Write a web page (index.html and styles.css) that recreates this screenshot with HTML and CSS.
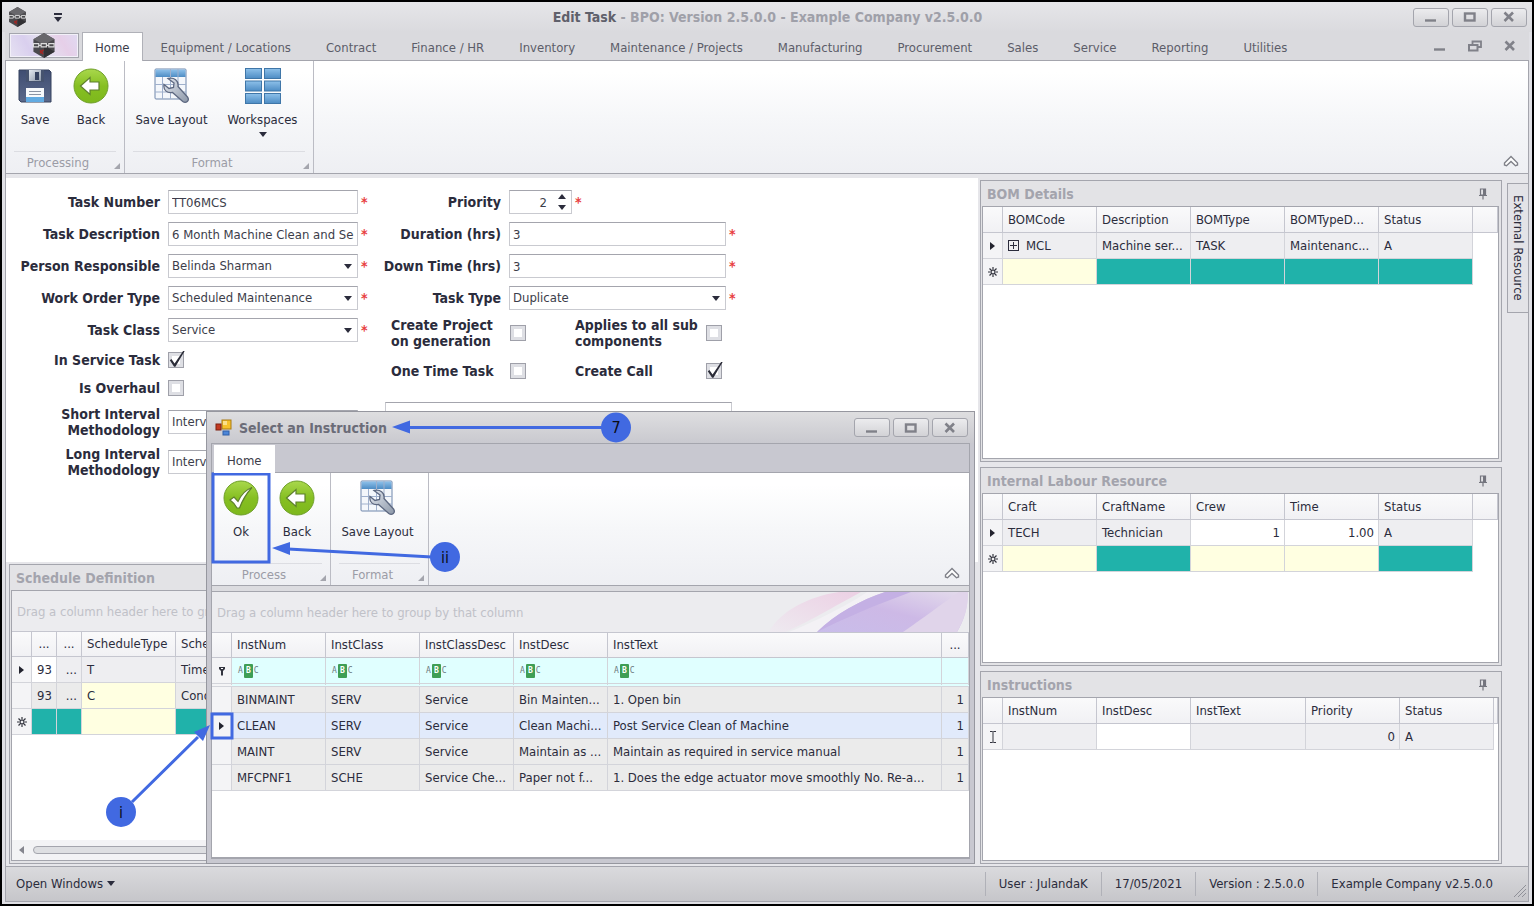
FILE: index.html
```html
<!DOCTYPE html>
<html lang="en">

<head>
    <meta charset="UTF-8">
    <meta name="viewport" content="width=device-width, initial-scale=1.0">
    <title>Edit Task - BPO</title>
    <link rel="stylesheet" href="styles.css">
</head>

<body>
    <svg class="sprite" width="0" height="0">
        <defs>
            <linearGradient id="green" x1="0" y1="0" x2="0" y2="1">
                <stop offset="0" stop-color="#a9d84c" />
                <stop offset="0.5" stop-color="#86bf22" />
                <stop offset="1" stop-color="#7db81c" />
            </linearGradient>
            <linearGradient id="blue" x1="0" y1="0" x2="0" y2="1">
                <stop offset="0" stop-color="#8ec1ea" />
                <stop offset="1" stop-color="#4d8cc4" />
            </linearGradient>
            <linearGradient id="navy" x1="0" y1="0" x2="0" y2="1">
                <stop offset="0" stop-color="#3f4d72" />
                <stop offset="1" stop-color="#5b698a" />
            </linearGradient>
            <linearGradient id="steel" x1="0" y1="0" x2="1" y2="1">
                <stop offset="0" stop-color="#e4e9f0" />
                <stop offset="1" stop-color="#8c97a8" />
            </linearGradient>
            <linearGradient id="petal" x1="0" y1="1" x2="1" y2="0">
                <stop offset="0" stop-color="#c9bdea" />
                <stop offset="0.5" stop-color="#cdb9e6" />
                <stop offset="1" stop-color="#e4dcec" />
            </linearGradient>
            <linearGradient id="pink" x1="0" y1="1" x2="1" y2="0">
                <stop offset="0" stop-color="#eeeaf0" />
                <stop offset="1" stop-color="#ecd0e4" />
            </linearGradient>
        </defs>
        <symbol id="logo" viewBox="0 0 24 26">
            <path d="M12 0L23 6.500V19.500L12 26L1 19.500V6.500Z" fill="#4a494d" />
            <path d="M12 0L23 6.500L12 12L1 6.500Z" fill="#68676b" />
            <path d="M12 13L23 19.500L12 26Z" fill="#323134" />
            <path d="M1 11h5.500v3.500H1zM9 11h5.500v3.500H9zM17 11h5.500v3.500H17zM6.500 12.800H9M14.500 12.800H17" fill="none" stroke="#dcdcdc" stroke-width="1.200" />
            <path d="M8 18l3 4M11.500 17.500l-3.500 3.500" stroke="#a32622" stroke-width="1.600" />
        </symbol>
        <symbol id="save" viewBox="0 0 36 36">
            <path d="M2 2h30l2 2v30H4l-2-2z" fill="url(#navy)" stroke="#36425f" />
            <path d="M9 2h18v12H9z" fill="#46536f" />
            <path d="M12 2h12v11H12z" fill="url(#steel)" />
            <path d="M18 4h4v8h-4z" fill="#36425f" />
            <path d="M9 20h18v13H9z" fill="#f7f9fb" />
            <path d="M9 29h18v5H9z" fill="#62abe2" />
            <path d="M12 23.500h12M12 26.500h12" stroke="#8a93a3" />
        </symbol>
        <symbol id="back" viewBox="0 0 36 36">
            <circle cx="18" cy="18" r="17" fill="url(#green)" stroke="#6f9f2a" />
            <path d="M7.500 18L17 9.500V14h9v8h-9v4.500z" fill="#fff" stroke="#5d7f2c" stroke-width="1.200" />
        </symbol>
        <symbol id="ok" viewBox="0 0 36 36">
            <circle cx="18" cy="18" r="17" fill="url(#green)" stroke="#6f9f2a" />
            <path d="M7 20l4-3 4 4.500C18 15 22 10 29 7.500C23 14 19.500 20 16.500 28h-2.500C12 24.500 10 22 7 20z" fill="#fff" stroke="#5d7f2c" stroke-width="1.200" />
        </symbol>
        <symbol id="layout" viewBox="0 0 36 36">
            <rect x="1" y="1" width="31" height="30" rx="1" fill="#f4f7fb" stroke="#6f86ab" />
            <rect x="1.500" y="1.500" width="30" height="7.500" fill="url(#blue)" />
            <path d="M1 16.500h31M1 24h31M8.500 9v22M16.500 1v30M24 1v30" stroke="#9fb0cc" />
            <path d="M14 10.500c6-1.500 11 2 10 8l9.500 10.500c2.500 3.500-1.500 7-4.700 4.500L18.500 24.500c-5 1-9.500-2-8.500-8l5 4 4.500-1 .5-4.500z" fill="url(#steel)" stroke="#5d6880" stroke-width="1.300" />
        </symbol>
        <symbol id="spaces" viewBox="0 0 36 36">
            <g fill="url(#blue)" stroke="#3f76a8">
                <rect x=".5" y=".5" width="16" height="10" />
                <rect x="19.500" y=".5" width="16" height="10" />
                <rect x=".5" y="13" width="16" height="10" />
                <rect x="19.500" y="13" width="16" height="10" />
                <rect x=".5" y="25.500" width="16" height="10" />
                <rect x="19.500" y="25.500" width="16" height="10" />
            </g>
        </symbol>
        <symbol id="min" viewBox="0 0 14 12">
            <path d="M1 9.500h11" stroke="#808189" stroke-width="2.400" />
        </symbol>
        <symbol id="max" viewBox="0 0 14 12">
            <rect x="2" y="2.500" width="9.500" height="7" fill="none" stroke="#808189" stroke-width="2.400" />
        </symbol>
        <symbol id="restore" viewBox="0 0 14 12">
            <path d="M4.500 4V1.500h8.500V7h-3" fill="none" stroke="#808189" stroke-width="1.800" />
            <rect x="1" y="5" width="8.500" height="5.500" fill="none" stroke="#808189" stroke-width="2" />
        </symbol>
        <symbol id="close" viewBox="0 0 14 12">
            <path d="M2.500 1.500l8.500 8.500M11 1.500L2.500 10" stroke="#808189" stroke-width="2.600" />
        </symbol>
        <symbol id="up" viewBox="0 0 16 12">
            <path d="M1.500 8L8 1.500L14.500 8v2l-2 .8L8 6.500L3.500 10.800L1.500 10z" fill="#fff" stroke="#7f8088" stroke-width="1.400" />
        </symbol>
        <symbol id="pin" viewBox="0 0 10 12">
            <path d="M2.500 1h5v6h-5zM1 7.500h8M5 8v3.500" fill="none" stroke="#74757e" stroke-width="1.200" />
            <path d="M5 1h2.500v6H5z" fill="#74757e" />
        </symbol>
        <symbol id="star" viewBox="0 0 10 10">
            <path d="M5 0v10M0 5h10M1.500 1.500l7 7M8.500 1.500l-7 7" stroke="#33343f" stroke-width="1.200" />
            <circle cx="5" cy="5" r="1.200" fill="#f4f4f6" />
        </symbol>
    </svg>

    <div class="window">
        <header class="titlebar">
            <svg class="title-logo"><use href="#logo" /></svg>
            <button class="quick" aria-label="Customize toolbar"><i class="caret"></i></button>
            <h1><b>Edit Task</b> - BPO: Version 2.5.0.0 - Example Company v2.5.0.0</h1>
            <div class="win-btns">
                <button aria-label="Minimize"><svg><use href="#min" /></svg></button>
                <button aria-label="Maximize"><svg><use href="#max" /></svg></button>
                <button aria-label="Close"><svg><use href="#close" /></svg></button>
            </div>
        </header>

        <nav class="tabs">
            <button class="app-btn" aria-label="Application menu"><svg><use href="#logo" /></svg></button>
            <a class="tab active" href="#">Home</a>
            <a class="tab" href="#">Equipment / Locations</a>
            <a class="tab" href="#">Contract</a>
            <a class="tab" href="#">Finance / HR</a>
            <a class="tab" href="#">Inventory</a>
            <a class="tab" href="#">Maintenance / Projects</a>
            <a class="tab" href="#">Manufacturing</a>
            <a class="tab" href="#">Procurement</a>
            <a class="tab" href="#">Sales</a>
            <a class="tab" href="#">Service</a>
            <a class="tab" href="#">Reporting</a>
            <a class="tab" href="#">Utilities</a>
            <div class="mdi-btns">
                <button aria-label="Minimize child"><svg><use href="#min" /></svg></button>
                <button aria-label="Restore child"><svg><use href="#restore" /></svg></button>
                <button aria-label="Close child"><svg><use href="#close" /></svg></button>
            </div>
        </nav>

        <section class="ribbon">
            <div class="group">
                <div class="group-btns">
                    <button class="big"><svg><use href="#save" /></svg>Save</button>
                    <button class="big"><svg><use href="#back" /></svg>Back</button>
                </div>
                <div class="group-name">Processing</div>
            </div>
            <div class="group">
                <div class="group-btns">
                    <button class="big wide"><svg><use href="#layout" /></svg>Save Layout</button>
                    <button class="big wide"><svg><use href="#spaces" /></svg>Workspaces<i class="caret"></i></button>
                </div>
                <div class="group-name">Format</div>
            </div>
            <button class="collapse" aria-label="Collapse ribbon"><svg><use href="#up" /></svg></button>
        </section>

        <main class="content">
            <div class="left">
                <form class="form">
                    <div class="form-col first">
                        <div class="field">
                            <label for="number">Task Number</label>
                            <input id="number" type="text" value="TT06MCS">
                            <span class="req">*</span>
                        </div>
                        <div class="field">
                            <label for="desc">Task Description</label>
                            <input id="desc" type="text" value="6 Month Machine Clean and Service">
                            <span class="req">*</span>
                        </div>
                        <div class="field">
                            <label for="person">Person Responsible</label>
                            <div class="combo"><select id="person"><option>Belinda Sharman</option></select></div>
                            <span class="req">*</span>
                        </div>
                        <div class="field">
                            <label for="wotype">Work Order Type</label>
                            <div class="combo"><select id="wotype"><option>Scheduled Maintenance</option></select></div>
                            <span class="req">*</span>
                        </div>
                        <div class="field">
                            <label for="class">Task Class</label>
                            <div class="combo"><select id="class"><option>Service</option></select></div>
                            <span class="req">*</span>
                        </div>
                        <div class="field check">
                            <label for="inservice">In Service Task</label>
                            <input id="inservice" type="checkbox" checked>
                        </div>
                        <div class="field check">
                            <label for="overhaul">Is Overhaul</label>
                            <input id="overhaul" type="checkbox">
                        </div>
                        <div class="field tall">
                            <label for="short">Short Interval Methodology</label>
                            <div class="combo"><select id="short"><option>Interval</option></select></div>
                        </div>
                        <div class="field tall">
                            <label for="long">Long Interval Methodology</label>
                            <div class="combo"><select id="long"><option>Interval</option></select></div>
                        </div>
                    </div>

                    <div class="form-col second">
                        <div class="field">
                            <label for="priority">Priority</label>
                            <div class="spin"><input id="priority" type="number" value="2"></div>
                            <span class="req">*</span>
                        </div>
                        <div class="field">
                            <label for="duration">Duration (hrs)</label>
                            <input id="duration" type="text" value="3">
                            <span class="req">*</span>
                        </div>
                        <div class="field">
                            <label for="down">Down Time (hrs)</label>
                            <input id="down" type="text" value="3">
                            <span class="req">*</span>
                        </div>
                        <div class="field">
                            <label for="type">Task Type</label>
                            <div class="combo"><select id="type"><option>Duplicate</option></select></div>
                            <span class="req">*</span>
                        </div>
                        <div class="checks">
                            <label for="project">Create Project<br>on generation</label>
                            <input id="project" type="checkbox">
                            <label for="subs">Applies to all sub<br>components</label>
                            <input id="subs" type="checkbox">
                            <label for="onetime">One Time Task</label>
                            <input id="onetime" type="checkbox">
                            <label for="call">Create Call</label>
                            <input id="call" type="checkbox" checked>
                        </div>
                        <textarea class="notes" aria-label="Notes"></textarea>
                    </div>
                </form>

                <section class="panel schedule">
                    <h2>Schedule Definition</h2>
                    <div class="grid">
                        <div class="group-panel">Drag a column header here to group by that column</div>
                        <table>
                            <colgroup>
                                <col class="ind"><col class="w25"><col class="w25"><col class="w94"><col class="w94"><col>
                            </colgroup>
                            <tr><th></th><th class="c">...</th><th class="c">...</th><th>ScheduleType</th><th>ScheduleDesc</th><th></th></tr>
                            <tr><td class="ind"><i class="arrow"></i></td><td class="edit">93</td><td class="r">...</td><td>T</td><td>Time</td></tr>
                            <tr class="alt"><td class="ind"></td><td>93</td><td class="r">...</td><td class="yellow">C</td><td>Condition</td></tr>
                            <tr><td class="ind"><svg class="star"><use href="#star" /></svg></td><td class="teal"></td><td class="teal"></td><td class="yellow"></td><td class="teal"></td></tr>
                        </table>
                        <div class="scroll"><i class="arrow"></i><span class="thumb"></span></div>
                    </div>
                </section>
            </div>

            <div class="right">
                <section class="panel bom">
                    <h2>BOM Details <svg class="pin"><use href="#pin" /></svg></h2>
                    <div class="grid">
                        <table>
                            <colgroup>
                                <col class="ind"><col class="w94"><col class="w94"><col class="w94"><col class="w94"><col class="w94"><col>
                            </colgroup>
                            <tr><th></th><th>BOMCode</th><th>Description</th><th>BOMType</th><th>BOMTypeD...</th><th>Status</th><th></th></tr>
                            <tr><td class="ind"><i class="arrow"></i></td><td><button class="expand" aria-label="Expand"></button>MCL</td><td>Machine ser...</td><td>TASK</td><td>Maintenanc...</td><td>A</td></tr>
                            <tr><td class="ind"><svg class="star"><use href="#star" /></svg></td><td class="yellow"></td><td class="teal"></td><td class="teal"></td><td class="teal"></td><td class="teal"></td></tr>
                        </table>
                    </div>
                </section>

                <section class="panel labour">
                    <h2>Internal Labour Resource <svg class="pin"><use href="#pin" /></svg></h2>
                    <div class="grid">
                        <table>
                            <colgroup>
                                <col class="ind"><col class="w94"><col class="w94"><col class="w94"><col class="w94"><col class="w94"><col>
                            </colgroup>
                            <tr><th></th><th>Craft</th><th>CraftName</th><th>Crew</th><th>Time</th><th>Status</th><th></th></tr>
                            <tr><td class="ind"><i class="arrow"></i></td><td>TECH</td><td>Technician</td><td class="edit r">1</td><td class="edit r">1.00</td><td>A</td></tr>
                            <tr><td class="ind"><svg class="star"><use href="#star" /></svg></td><td class="yellow"></td><td class="teal"></td><td class="yellow"></td><td class="yellow"></td><td class="teal"></td></tr>
                        </table>
                    </div>
                </section>

                <section class="panel instructions">
                    <h2>Instructions <svg class="pin"><use href="#pin" /></svg></h2>
                    <div class="grid">
                        <table>
                            <colgroup>
                                <col class="ind"><col class="w94"><col class="w94"><col class="w115"><col class="w94"><col class="w94"><col>
                            </colgroup>
                            <tr><th></th><th>InstNum</th><th>InstDesc</th><th>InstText</th><th>Priority</th><th>Status</th><th></th></tr>
                            <tr><td class="ind"><svg class="ibeam" viewBox="0 0 8 12"><path d="M1 .5h2.500l.5.500l.5-.500H7M1 11.500h2.500l.5-.500l.5.500H7M4 1v10" fill="none" stroke="#33343f" /></svg></td><td></td><td class="edit"></td><td></td><td class="r">0</td><td>A</td></tr>
                        </table>
                    </div>
                </section>
            </div>

            <aside class="side">
                <button class="side-tab">External Resource</button>
            </aside>
        </main>

        <footer class="status">
            <button class="open-windows">Open Windows <i class="caret"></i></button>
            <span class="item">User : JulandaK</span>
            <span class="item">17/05/2021</span>
            <span class="item">Version : 2.5.0.0</span>
            <span class="item">Example Company v2.5.0.0</span>
            <svg class="grip" viewBox="0 0 14 14"><path d="M1 13L13 1M5 13l8-8M9 13l4-4" stroke="#8f9098" /></svg>
        </footer>

        <div class="dialog" role="dialog" aria-labelledby="dialog-title">
            <header class="dialog-title">
                <svg class="form-icon" viewBox="0 0 17 17">
                    <rect x="7" y="1" width="9" height="9" fill="#f6c12c" stroke="#a97b12" />
                    <rect x="8" y="2" width="4" height="4" fill="#fbe08a" />
                    <rect x="1" y="5" width="5" height="6" fill="#c23a22" stroke="#7f2010" />
                    <rect x="8" y="12" width="6" height="4" fill="#4c86d8" stroke="#2f5ea8" />
                </svg>
                <h2 id="dialog-title">Select an Instruction</h2>
                <div class="win-btns">
                    <button aria-label="Minimize"><svg><use href="#min" /></svg></button>
                    <button aria-label="Maximize"><svg><use href="#max" /></svg></button>
                    <button aria-label="Close"><svg><use href="#close" /></svg></button>
                </div>
            </header>
            <div class="dialog-body">
                <nav class="tabs">
                    <a class="tab active" href="#">Home</a>
                </nav>
                <section class="ribbon">
                    <div class="group">
                        <div class="group-btns">
                            <button class="big"><svg><use href="#ok" /></svg>Ok</button>
                            <button class="big"><svg><use href="#back" /></svg>Back</button>
                        </div>
                        <div class="group-name">Process</div>
                    </div>
                    <div class="group">
                        <div class="group-btns">
                            <button class="big wide"><svg><use href="#layout" /></svg>Save Layout</button>
                        </div>
                        <div class="group-name">Format</div>
                    </div>
                    <button class="collapse" aria-label="Collapse ribbon"><svg><use href="#up" /></svg></button>
                </section>
                <div class="grid">
                    <div class="group-panel">Drag a column header here to group by that column
                        <svg class="petals" viewBox="0 0 200 40">
                            <path d="M0 40C10 20 40 4 70 0H92C66 14 36 32 16 40Z" fill="url(#pink)" />
                            <path d="M20 40C50 28 84 10 98 0H118C90 10 62 26 48 40Z" fill="#f3f1f5" />
                            <path d="M48 40C66 22 92 8 116 0H199C199 16 195 28 188 40Z" fill="url(#petal)" />
                            <path d="M134 40C156 25 172 12 190 0H199C199 16 195 28 188 40Z" fill="#e0d4ea" />
                            <path d="M48 40C66 22 92 8 116 0H142C104 14 76 26 48 40Z" fill="#c4b0e4" />
                        </svg>
                    </div>
                    <table>
                        <colgroup>
                            <col class="ind"><col class="w94"><col class="w94"><col class="w94"><col class="w94"><col><col class="w27">
                        </colgroup>
                        <tr><th></th><th>InstNum</th><th>InstClass</th><th>InstClassDesc</th><th>InstDesc</th><th>InstText</th><th class="c">...</th></tr>
                        <tr class="filter">
                            <td class="ind"><svg class="funnel" viewBox="0 0 8 10"><path d="M1 1h6v2L5 5v4.500H3V5L1 3z" fill="#33343f" /><path d="M3 2.500h2" stroke="#fff" /></svg></td>
                            <td><span class="abc">A<b>B</b>C</span></td>
                            <td><span class="abc">A<b>B</b>C</span></td>
                            <td><span class="abc">A<b>B</b>C</span></td>
                            <td><span class="abc">A<b>B</b>C</span></td>
                            <td><span class="abc">A<b>B</b>C</span></td>
                            <td></td>
                        </tr>
                        <tr class="alt"><td class="ind"></td><td>BINMAINT</td><td>SERV</td><td>Service</td><td>Bin Mainten...</td><td>1. Open bin</td><td class="r">1</td></tr>
                        <tr class="selected"><td class="ind"><i class="arrow"></i></td><td>CLEAN</td><td>SERV</td><td>Service</td><td>Clean Machi...</td><td>Post Service Clean of Machine</td><td class="r">1</td></tr>
                        <tr class="alt"><td class="ind"></td><td>MAINT</td><td>SERV</td><td>Service</td><td>Maintain as ...</td><td>Maintain as required in service manual</td><td class="r">1</td></tr>
                        <tr class="alt"><td class="ind"></td><td>MFCPNF1</td><td>SCHE</td><td>Service Che...</td><td>Paper not f...</td><td>1. Does the edge actuator move smoothly No. Re-a...</td><td class="r">1</td></tr>
                    </table>
                </div>
            </div>

            <!-- step markers, in dialog coordinates -->
            <svg class="markers" width="769" height="453">
                <g fill="none" stroke="#4169e1" stroke-width="3">
                    <rect x="7" y="63" width="56" height="88" />
                    <rect x="6" y="303" width="20" height="24" />
                    <path d="M204 16.500H396M82 138L226 146M-74 391L-8 326" />
                </g>
                <path d="M186 16l18-6.500v13zM66 137l18-6v13zM4 314l-7 16-9-9z" fill="#4169e1" />
                <g fill="#4169e1">
                    <circle cx="410" cy="16.500" r="15" />
                    <circle cx="239" cy="146" r="15" />
                    <circle cx="-85" cy="401" r="15" />
                </g>
                <g class="marker-text">
                    <text x="410" y="22">7</text>
                    <text x="239" y="152">ii</text>
                    <text x="-85" y="407">i</text>
                </g>
            </svg>
        </div>
    </div>
</body>

</html>
```
FILE: styles.css
```css
* {
    box-sizing: border-box;
}

html {
    height: 100%;
}

body {
    margin: 0;
    height: 100%;
    padding: 2px;
    background: #000;
    color: #2b2c3c;
    font-family: "DejaVu Sans Condensed", Tahoma, "Noto Sans", sans-serif;
    font-size: 13px;
    line-height: 16px;
}

button {
    border: none;
    background: none;
    padding: 0;
    color: inherit;
    font: inherit;
}

svg {
    display: block;
    flex: none;
}

h1,
h2 {
    margin: 0;
    font-size: 14px;
    line-height: 16px;
}

.sprite {
    position: absolute;
}

.window {
    position: relative;
    display: flex;
    flex-direction: column;
    height: 100%;
    min-height: 900px;
    padding: 0 3px 2px;
    background: #e0e0e5;
}

.caret {
    display: inline-block;
    border: 4px solid transparent;
    border-top: 5px solid #2b2c3c;
    border-bottom: none;
}

.arrow {
    display: inline-block;
    border: 4px solid transparent;
    border-left: 5px solid #22232e;
    border-right: none;
}

/* title bar */

.titlebar {
    display: flex;
    align-items: center;
    height: 30px;
    margin: 0 -3px;
    padding: 0 5px 0 6px;
    background: linear-gradient(#e6e6e9, #dadade);
}

.title-logo {
    width: 19px;
    height: 20px;
}

.quick {
    margin-left: 27px;
    border-top: 2px solid #2b2c3c;
    line-height: 6px;
}

.titlebar h1 {
    flex: 1;
    padding-left: 60px;
    text-align: center;
    color: #9fa0a9;
}

.titlebar h1 b {
    color: #5f606b;
}

.win-btns {
    display: flex;
    gap: 3px;
}

.win-btns button {
    display: flex;
    align-items: center;
    justify-content: center;
    width: 36px;
    height: 19px;
    border: 1px solid #a4a5ad;
    border-radius: 3px;
    background: linear-gradient(#ececee, #d2d2d6);
}

.win-btns svg,
.mdi-btns svg {
    width: 14px;
    height: 12px;
}

/* tabs */

.tabs {
    display: flex;
    gap: 1px;
    height: 28px;
    padding-left: 4px;
    background: #dadade;
}

.app-btn {
    display: flex;
    align-items: center;
    justify-content: center;
    width: 70px;
    height: 25px;
    margin: 1px 2px 0 0;
    border: 1px solid #a4a5ad;
    background: linear-gradient(60deg, #e6e2f2, #d9cfee 30%, #e4e0f0 50%, #e6cfe8 75%, #e0daf2);
    box-shadow: inset 0 0 0 1px #f2f0f8;
}

.app-btn svg {
    width: 24px;
    height: 25px;
}

.tab {
    padding: 8px 17px 0;
    color: #5c5d69;
    text-decoration: none;
    white-space: nowrap;
}

.tab.active {
    position: relative;
    z-index: 1;
    height: 29px;
    padding: 7px 12px 0;
    border: 1px solid #b0b1b8;
    border-bottom: none;
    background: #fff;
    color: #3c3d4a;
}

.mdi-btns {
    display: flex;
    align-items: center;
    gap: 21px;
    margin-left: auto;
    padding-right: 12px;
}

/* ribbon */

.ribbon {
    display: flex;
    flex: none;
    height: 114px;
    border: 1px solid #a4a5ad;
    background: linear-gradient(#fff 10%, #f6f7f9 50%, #eeeff3);
}

.group {
    display: flex;
    flex-direction: column;
    border-right: 1px solid #bbbcc4;
}

.group-btns {
    display: flex;
    flex: 1;
    padding: 7px 5px 0 1px;
}

.big {
    display: flex;
    flex-direction: column;
    align-items: center;
    width: 56px;
}

.big.wide {
    width: 91px;
}

.big svg {
    width: 36px;
    height: 36px;
    margin-bottom: 8px;
}

.big .caret {
    margin-top: 4px;
}

.group-name {
    position: relative;
    height: 22px;
    margin: 0 8px;
    padding-top: 3px;
    border-top: 1px solid #dcdde2;
    padding-right: 14px;
    text-align: center;
    color: #9b9ca6;
}

.group-name::after {
    content: "";
    position: absolute;
    right: -4px;
    bottom: 4px;
    border-left: 6px solid transparent;
    border-bottom: 6px solid #a4a5ad;
}

.collapse {
    align-self: flex-end;
    margin: 0 9px 6px auto;
}

.collapse svg {
    width: 16px;
    height: 12px;
}

/* content */

.content {
    display: flex;
    flex: 1;
    min-height: 0;
    padding: 4px 0 2px;
    border: 1px solid #a4a5ad;
    border-top: none;
    background: #e6e6ea;
}

.left {
    display: flex;
    flex: 1;
    flex-direction: column;
    min-width: 0;
}

.form {
    display: flex;
    flex: 1;
    gap: 14px;
    min-height: 0;
    padding-top: 8px;
    background: #fff;
}

.form-col {
    display: flex;
    flex-direction: column;
}

.field {
    display: grid;
    grid-template-columns: 154px 190px auto;
    align-items: center;
    column-gap: 8px;
    height: 32px;
}

.second .field {
    grid-template-columns: 118px 217px auto;
}

.first {
    width: 363px;
}

.field.check {
    height: 28px;
}

.field.tall {
    height: 40px;
}

label {
    font-size: 14px;
    font-weight: bold;
}

.field label {
    text-align: right;
}

.field.tall label {
    padding-left: 40px;
}

input,
select,
textarea {
    margin: 0;
    border: 1px solid #c9cad0;
    border-top-color: #a4a5ad;
    border-radius: 0;
    background: #fff;
    color: #3c3d4a;
    font: inherit;
}

.field input[type="text"],
.field select {
    width: 100%;
    height: 24px;
    padding: 0 3px;
}

select {
    appearance: none;
}

.combo {
    position: relative;
}

.combo::after {
    content: "";
    position: absolute;
    right: 6px;
    top: 10px;
    border: 4px solid transparent;
    border-top: 5px solid #2b2c3c;
    border-bottom: none;
}

.spin {
    position: relative;
    width: 63px;
}

.spin input {
    width: 100%;
    height: 24px;
    padding: 0 24px 0 0;
    text-align: right;
    appearance: textfield;
}

.spin input::-webkit-inner-spin-button {
    appearance: none;
    margin: 0;
}

.spin::before,
.spin::after {
    content: "";
    position: absolute;
    right: 6px;
    border: 4px solid transparent;
}

.spin::before {
    top: 4px;
    border-top: none;
    border-bottom: 5px solid #2b2c3c;
}

.spin::after {
    bottom: 4px;
    border-bottom: none;
    border-top: 5px solid #2b2c3c;
}

.second .field:first-child {
    grid-template-columns: 118px 63px auto;
}

.req {
    margin-left: -5px;
    color: #e84040;
    font-size: 14px;
    font-weight: bold;
}

input[type="checkbox"] {
    appearance: none;
    position: relative;
    width: 16px;
    height: 16px;
    border: 1px solid #9fa0a9;
    background: #fff;
    box-shadow: inset 0 0 0 3px #dedfe4;
}

input[type="checkbox"]:checked::before {
    content: "";
    position: absolute;
    left: 0;
    top: -2px;
    width: 16px;
    height: 16px;
    background: #2b2c38;
    clip-path: polygon(5% 58%, 15% 50%, 35% 78%, 88% 0, 98% 0, 40% 98%, 32% 98%);
}

.checks {
    display: grid;
    grid-template-columns: 119px 65px 131px 16px;
    grid-auto-rows: 38px;
    align-items: center;
    padding-left: 8px;
}

.notes {
    width: 347px;
    height: 120px;
    margin: 12px 0 0 2px;
    resize: none;
}

/* docked panels */

.panel {
    display: flex;
    flex-direction: column;
    padding: 0 2px 2px 1px;
    border: 1px solid #a4a5ad;
    background: #e3e3e6;
}

.panel h2 {
    display: flex;
    align-items: center;
    justify-content: space-between;
    height: 25px;
    padding: 0 11px 0 5px;
    color: #a3a4ad;
}

.pin {
    width: 10px;
    height: 12px;
}

.schedule {
    height: 300px;
    margin: 2px 3px 0;
}

.right {
    display: flex;
    flex-direction: column;
    gap: 5px;
    width: 522px;
    margin: 2px 5px 0 2px;
}

.bom {
    flex: 283;
}

.labour {
    flex: 198;
}

.instructions {
    flex: 192;
}

.grid {
    display: flex;
    flex: 1;
    flex-direction: column;
    overflow: hidden;
    border: 1px solid #a4a5ad;
    background: #fff;
}

.group-panel {
    position: relative;
    flex: none;
    height: 40px;
    padding: 13px 5px;
    background: #ececef;
    color: #c0c1c8;
    white-space: nowrap;
}

table {
    width: 100%;
    table-layout: fixed;
    border-spacing: 0;
}

col.ind {
    width: 20px;
}

.w25 {
    width: 25px;
}

.w27 {
    width: 27px;
}

.w94 {
    width: 94px;
}

.w115 {
    width: 115px;
}

th,
td {
    height: 26px;
    padding: 0 0 0 5px;
    border-right: 1px solid #d3d4da;
    border-bottom: 1px solid #d3d4da;
    background: #eeeef1;
    font-weight: normal;
    text-align: left;
    white-space: nowrap;
}

th {
    border-color: #c5c6cf;
    background: linear-gradient(#fafafb, #f1f1f4);
}

.group-panel + table th {
    border-top: 1px solid #c5c6cf;
}

.alt td {
    background: #ebebeb;
}

.c {
    padding: 0;
    text-align: center;
}

.r {
    padding-right: 4px;
    text-align: right;
}

td.ind,
.alt td.ind,
.filter td.ind,
.selected td.ind {
    padding: 0;
    background: #f4f4f6;
    text-align: center;
}

td.edit {
    background: #fff;
}

td.teal {
    background: #20b2aa;
}

td.yellow,
.alt td.yellow {
    background: #ffffe1;
}

.filter td {
    height: 29px;
    border-bottom: 4px double #d3d4da;
    background: #e0ffff;
}

.selected td {
    background: #e1eafb;
}

.star,
.funnel,
.ibeam {
    width: 10px;
    height: 10px;
    margin: 0 auto;
}

.ibeam {
    height: 12px;
}

.expand {
    position: relative;
    width: 11px;
    height: 11px;
    margin-right: 7px;
    border: 1px solid #2b2c3c;
    background: linear-gradient(#2b2c3c, #2b2c3c) center / 7px 1px no-repeat, linear-gradient(#2b2c3c, #2b2c3c) center / 1px 7px no-repeat;
}

.abc {
    display: flex;
    align-items: center;
    gap: 1px;
    padding-left: 1px;
    color: #6d7a80;
    font: 8px/14px "DejaVu Sans Mono", monospace;
}

.abc b {
    width: 9px;
    background: #3f9e55;
    border-radius: 1px;
    color: #fff;
    text-align: center;
}

.scroll {
    display: flex;
    align-items: center;
    height: 20px;
    margin-top: auto;
    padding-left: 7px;
    background: #f3f3f5;
}

.scroll .arrow {
    border-left: none;
    border-right: 5px solid #85868e;
}

.thumb {
    width: 600px;
    height: 8px;
    margin-left: 9px;
    border: 1px solid #a4a5ad;
    border-radius: 4px;
    background: #dedfe2;
}

.side {
    width: 21px;
    padding-top: 5px;
}

.side-tab {
    width: 21px;
    height: 130px;
    border: 1px solid #a4a5ad;
    border-right: none;
    background: #e3e3e7;
    writing-mode: vertical-rl;
}

/* status bar */

.status {
    display: flex;
    align-items: center;
    height: 35px;
    padding-left: 10px;
    border: 1px solid #a4a5ad;
    border-top: none;
    background: linear-gradient(#dadadd, #c6c6ca);
}

.open-windows {
    margin-right: auto;
}

.open-windows .caret {
    margin-bottom: 2px;
}

.status .item {
    padding: 4px 13px;
    border-left: 1px solid #b0b1b8;
}

.grip {
    align-self: flex-end;
    width: 14px;
    height: 14px;
    margin: 0 1px 3px 7px;
}

/* dialog */

.dialog {
    position: absolute;
    left: 204px;
    top: 409px;
    display: flex;
    flex-direction: column;
    width: 769px;
    height: 453px;
    padding: 0 4px 4px;
    border: 1px solid #96979f;
    background: #c8c8d0;
}

.dialog-title {
    display: flex;
    align-items: center;
    height: 31px;
    margin: 0 -4px;
    padding: 0 6px 0 8px;
    background: linear-gradient(#dedee0, #c9c9cf);
}

.form-icon {
    width: 17px;
    height: 17px;
    margin-right: 7px;
}

.dialog-title h2 {
    flex: 1;
    color: #6b6c78;
}

.dialog-body {
    display: flex;
    flex: 1;
    flex-direction: column;
    border: 1px solid #a4a5ad;
    background: #dcdce0;
}

.dialog .tabs {
    flex: none;
    padding: 1px 0 0 2px;
    background: #c8c8d0;
}

.dialog .tab.active {
    height: 28px;
    border-color: #fff;
}

.dialog .ribbon {
    border-left: none;
    border-right: none;
}

.dialog .grid {
    margin: 5px -1px 0;
}

.petals {
    position: absolute;
    right: 0;
    top: 0;
    width: 200px;
    height: 40px;
}

.markers {
    position: absolute;
    left: -1px;
    top: -1px;
    overflow: visible;
    pointer-events: none;
}

.marker-text {
    font-size: 16px;
    text-anchor: middle;
    fill: #0c0d16;
}
```
